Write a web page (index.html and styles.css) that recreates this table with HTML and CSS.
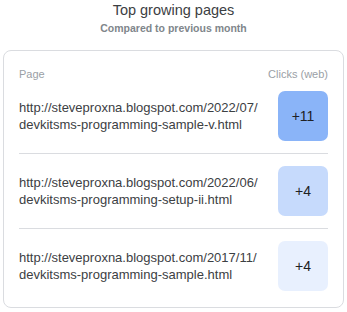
FILE: index.html
```html
<!DOCTYPE html>
<html>
<head>
<meta charset="utf-8">
<link rel="stylesheet" href="styles.css">
</head>
<body>
<div class="widget">
  <div class="heading">
    <div class="title">Top growing pages</div>
    <div class="subtitle">Compared to previous month</div>
  </div>
  <div class="card">
    <div class="head-row">
      <span>Page</span>
      <span>Clicks (web)</span>
    </div>
    <div class="row">
      <div class="url">http://steveproxna.blogspot.com/2022/07/<br>devkitsms-programming-sample-v.html</div>
      <div class="count level-1">+11</div>
    </div>
    <div class="row">
      <div class="url">http://steveproxna.blogspot.com/2022/06/<br>devkitsms-programming-setup-ii.html</div>
      <div class="count level-2">+4</div>
    </div>
    <div class="row">
      <div class="url">http://steveproxna.blogspot.com/2017/11/<br>devkitsms-programming-sample.html</div>
      <div class="count level-3">+4</div>
    </div>
  </div>
</div>
</body>
</html>
```
FILE: styles.css
```css
* { box-sizing: border-box; }
html, body { margin: 0; padding: 0; background: #fff; }
body {
  font-family: "Liberation Sans", Arial, sans-serif;
  color: #3c4043;
}
.widget {
  padding: 1px 3px 0 3px;
}
.heading {
  text-align: center;
}
.title {
  font-size: 14.5px;
  line-height: 18px;
  color: #3c4043;
}
.subtitle {
  font-size: 10.5px;
  line-height: 14px;
  font-weight: bold;
  color: #80868b;
  margin-top: 2px;
}
.card {
  margin-top: 15px;
  border: 1px solid #dadce0;
  border-radius: 8px;
  padding: 16px 15px 4px 15px;
}
.head-row {
  display: flex;
  justify-content: space-between;
  font-size: 11px;
  line-height: 14px;
  color: #9aa0a6;
}
.row {
  display: flex;
  align-items: center;
  justify-content: space-between;
  padding: 12px 0;
  border-bottom: 1px solid #dadce0;
}
.row:first-of-type { padding-top: 10px; }
.head-row + .row { padding-top: 10px; }
.row:last-child { border-bottom: none; }
.url {
  font-size: 13px;
  line-height: 17px;
  color: #3c4043;
}
.count {
  flex: none;
  width: 50px;
  height: 50px;
  border-radius: 7px;
  display: flex;
  align-items: center;
  justify-content: center;
  font-size: 14px;
  color: #202124;
}
.level-1 { background: #8ab4f8; }
.level-2 { background: #c6dafc; }
.level-3 { background: #e8f0fe; }
```
